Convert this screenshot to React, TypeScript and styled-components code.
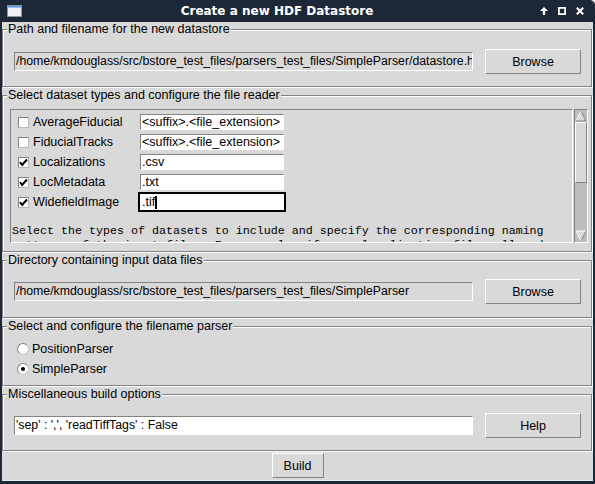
import React from "react";
import styled, { createGlobalStyle } from "styled-components";

const BG = "#d9d9d9";
const DARK = "#828282";
const NAVY = "#1c2838";

const GlobalStyle = createGlobalStyle`
  html, body { margin: 0; padding: 0; background: #ffffff; }
  body { font-family: "Liberation Sans", Arial, sans-serif; }
  * { box-sizing: border-box; }
`;

const Window = styled.div`
  width: 595px;
  height: 484px;
  background: ${BG};
  border-left: 2px solid ${NAVY};
  border-right: 2px solid ${NAVY};
  border-bottom: 3px solid ${NAVY};
  border-top-right-radius: 5px;
  overflow: hidden;
  display: flex;
  flex-direction: column;
  color: #000;
  font-size: 12.5px;
`;

const TitleBar = styled.div`
  height: 22px;
  flex: none;
  background: ${NAVY};
  display: flex;
  align-items: center;
  margin: 0 -2px;
  padding: 0 11px 0 7px;
`;

const TitleText = styled.div`
  flex: 1;
  text-align: center;
  color: #ffffff;
  font-family: "DejaVu Sans", sans-serif;
  font-weight: bold;
  font-size: 12px;
  padding-right: 8px;
`;

const TitleControls = styled.div`
  display: flex;
  align-items: center;
  gap: 10px;
`;

const Content = styled.div`
  flex: 1;
  display: flex;
  flex-direction: column;
`;

const Section = styled.fieldset`
  margin: 0 1px 1px 0;
  padding: 0;
  min-width: 0;
  border: 1px solid ${DARK};
  box-shadow: inset 1px 1px 0 #ffffff, 1px 1px 0 #ffffff;
`;

const Legend = styled.legend`
  margin-left: 4px;
  padding: 0 1px;
  font-size: 12.5px;
  line-height: 14px;
  background: ${BG};
  white-space: nowrap;
`;

const FieldRow = styled.div<{ $top: number; $bottom: number }>`
  display: flex;
  align-items: center;
  gap: 12px;
  padding: ${(p) => p.$top}px 10px ${(p) => p.$bottom}px 11px;
`;

const Entry = styled.div<{ $editable?: boolean }>`
  flex: 1;
  min-width: 0;
  height: 19px;
  background: ${(p) => (p.$editable ? "#ffffff" : BG)};
  border: 1px solid;
  border-color: ${DARK} #ffffff #ffffff ${DARK};
  padding: 0 1px;
  font-size: 12.3px;
  line-height: 17px;
  white-space: nowrap;
  overflow: hidden;
`;

const Button = styled.button<{ $width: number }>`
  width: ${(p) => p.$width}px;
  height: 25px;
  flex: none;
  background: ${BG};
  border: 1px solid;
  border-color: #ffffff ${DARK} ${DARK} #ffffff;
  font-family: "Liberation Sans", Arial, sans-serif;
  font-size: 12.5px;
  color: #000;
  padding: 0;
`;

const ReaderBody = styled.div`
  display: flex;
  gap: 1px;
  padding: 7px 3px 8px 7px;
`;

const Canvas = styled.div`
  flex: 1;
  height: 134px;
  border: 1px solid;
  border-color: ${DARK} #ffffff #ffffff ${DARK};
  overflow: hidden;
  padding-top: 2px;
`;

const TypeGrid = styled.div`
  display: grid;
  grid-template-columns: 11px 101px 148px;
  grid-auto-rows: 20px;
  column-gap: 4px;
  align-items: center;
  padding-left: 7px;
`;

const CheckBox = styled.span`
  width: 11px;
  height: 11px;
  background: #ffffff;
  border: 1px solid;
  border-color: ${DARK} #b8b8b8 #b8b8b8 ${DARK};
  display: flex;
  align-items: center;
  justify-content: center;
`;

const TypeLabel = styled.span`
  white-space: nowrap;
`;

const EntryRing = styled.div<{ $focused?: boolean }>`
  height: 20px;
  border: 2px solid ${(p) => (p.$focused ? "#000000" : BG)};
`;

const EntryField = styled.div<{ $focused?: boolean }>`
  height: 100%;
  background: #ffffff;
  border: 1px solid;
  border-color: ${(p) => (p.$focused ? "#ffffff" : `${DARK} #ffffff #ffffff ${DARK}`)};
  line-height: 14px;
  padding: 0 1px;
  white-space: nowrap;
  overflow: hidden;
  display: flex;
  align-items: center;
`;

const Caret = styled.span`
  display: inline-block;
  width: 2px;
  height: 13px;
  background: #000;
`;

const Description = styled.div`
  margin-top: 12px;
  font-family: "Liberation Mono", monospace;
  font-size: 11.67px;
  line-height: 14px;
  white-space: pre;
  padding-left: 1px;
`;

const ScrollBar = styled.div`
  width: 14px;
  height: 134px;
  flex: none;
  border: 1px solid;
  border-color: ${DARK} #ffffff #ffffff ${DARK};
  background: #bdbdbd;
  display: flex;
  flex-direction: column;
`;

const ScrollArrow = styled.div`
  height: 12px;
  flex: none;
  display: flex;
`;

const ScrollThumb = styled.div`
  height: 61px;
  flex: none;
  background: ${BG};
  border: 1px solid;
  border-color: #ffffff ${DARK} ${DARK} #ffffff;
`;

const ScrollSpace = styled.div`
  flex: 1;
`;

const RadioBody = styled.div`
  padding: 6px 0 6px 14px;
  display: flex;
  flex-direction: column;
`;

const RadioRow = styled.label`
  height: 20px;
  display: flex;
  align-items: center;
  gap: 3px;
`;

const Radio = styled.span<{ $on?: boolean }>`
  width: 12px;
  height: 12px;
  border-radius: 50%;
  background: #ffffff;
  border: 1px solid;
  border-color: ${DARK} #c8c8c8 #c8c8c8 ${DARK};
  display: flex;
  align-items: center;
  justify-content: center;
  &::after {
    content: "";
    width: 4px;
    height: 4px;
    border-radius: 50%;
    background: ${(p) => (p.$on ? "#000" : "transparent")};
  }
`;

const BuildBar = styled.div`
  flex: 1;
  display: flex;
  justify-content: center;
  align-items: flex-start;
  padding-top: 1px;
  border-bottom: 1px solid #ececec;
`;

const WindowIcon = () => (
  <svg width="15" height="12" viewBox="0 0 15 12">
    <rect x="0.5" y="0.5" width="14" height="11" fill="#eef0f3" stroke="#8d95a3" />
    <rect x="1" y="1" width="13" height="1.5" fill="#5d8fe0" />
  </svg>
);

const UpIcon = () => (
  <svg width="8" height="8" viewBox="0 0 8 8">
    <polygon points="4,0 8,4 5.2,4 5.2,8 2.8,8 2.8,4 0,4" fill="#ffffff" />
  </svg>
);

const MaxIcon = () => (
  <svg width="8" height="8" viewBox="0 0 8 8">
    <rect x="0.9" y="0.9" width="6.2" height="6.2" fill="none" stroke="#ffffff" strokeWidth="1.8" />
  </svg>
);

const CloseIcon = () => (
  <svg width="8" height="8" viewBox="0 0 8 8">
    <path d="M0.8 0.8 L7.2 7.2 M7.2 0.8 L0.8 7.2" stroke="#ffffff" strokeWidth="2" />
  </svg>
);

const CheckMark = () => (
  <svg width="9" height="9" viewBox="0 0 9 9">
    <polyline points="1,4.2 3.2,7 8,1.5" fill="none" stroke="#000" strokeWidth="2" />
  </svg>
);

const ArrowUp = () => (
  <svg width="12" height="12" viewBox="0 0 12 12">
    <polygon points="6,1 11,11 1,11" fill={BG} />
    <path d="M1 11 L6 1" stroke="#ffffff" />
    <path d="M6 1 L11 11 L1 11" stroke={DARK} fill="none" />
  </svg>
);

const ArrowDown = () => (
  <svg width="12" height="12" viewBox="0 0 12 12">
    <polygon points="1,1 11,1 6,11" fill={BG} />
    <path d="M6 11 L1 1 L11 1" stroke="#ffffff" fill="none" />
    <path d="M11 1 L6 11" stroke={DARK} />
  </svg>
);

const datasetTypes = [
  { name: "AverageFiducial", checked: false, value: "<suffix>.<file_extension>" },
  { name: "FiducialTracks", checked: false, value: "<suffix>.<file_extension>" },
  { name: "Localizations", checked: true, value: ".csv" },
  { name: "LocMetadata", checked: true, value: ".txt" },
  { name: "WidefieldImage", checked: true, value: ".tif", focused: true },
];

export default function App() {
  return (
    <>
      <GlobalStyle />
      <Window>
        <TitleBar>
          <WindowIcon />
          <TitleText>Create a new HDF Datastore</TitleText>
          <TitleControls>
            <UpIcon />
            <MaxIcon />
            <CloseIcon />
          </TitleControls>
        </TitleBar>
        <Content>
          <Section>
            <Legend>Path and filename for the new datastore</Legend>
            <FieldRow $top={13} $bottom={12}>
              <Entry>/home/kmdouglass/src/bstore_test_files/parsers_test_files/SimpleParser/datastore.h5</Entry>
              <Button $width={96}>Browse</Button>
            </FieldRow>
          </Section>

          <Section>
            <Legend>Select dataset types and configure the file reader</Legend>
            <ReaderBody>
              <Canvas>
                <TypeGrid>
                  {datasetTypes.map((t) => (
                    <React.Fragment key={t.name}>
                      <CheckBox>{t.checked && <CheckMark />}</CheckBox>
                      <TypeLabel>{t.name}</TypeLabel>
                      <EntryRing $focused={t.focused}>
                        <EntryField $focused={t.focused}>
                          {t.value}
                          {t.focused && <Caret />}
                        </EntryField>
                      </EntryRing>
                    </React.Fragment>
                  ))}
                </TypeGrid>
                <Description>
                  {"Select the types of datasets to include and specify the corresponding naming\npatterns of the input files. For example, if your localization files all end"}
                </Description>
              </Canvas>
              <ScrollBar>
                <ScrollArrow>
                  <ArrowUp />
                </ScrollArrow>
                <ScrollThumb />
                <ScrollSpace />
                <ScrollArrow>
                  <ArrowDown />
                </ScrollArrow>
              </ScrollBar>
            </ReaderBody>
          </Section>

          <Section>
            <Legend>Directory containing input data files</Legend>
            <FieldRow $top={12} $bottom={13}>
              <Entry>/home/kmdouglass/src/bstore_test_files/parsers_test_files/SimpleParser</Entry>
              <Button $width={96}>Browse</Button>
            </FieldRow>
          </Section>

          <Section>
            <Legend>Select and configure the filename parser</Legend>
            <RadioBody>
              <RadioRow>
                <Radio />
                PositionParser
              </RadioRow>
              <RadioRow>
                <Radio $on />
                SimpleParser
              </RadioRow>
            </RadioBody>
          </Section>

          <Section>
            <Legend>Miscellaneous build options</Legend>
            <FieldRow $top={12} $bottom={12}>
              <Entry $editable>'sep' : ',', 'readTiffTags' : False</Entry>
              <Button $width={96}>Help</Button>
            </FieldRow>
          </Section>

          <BuildBar>
            <Button $width={52}>Build</Button>
          </BuildBar>
        </Content>
      </Window>
    </>
  );
}
